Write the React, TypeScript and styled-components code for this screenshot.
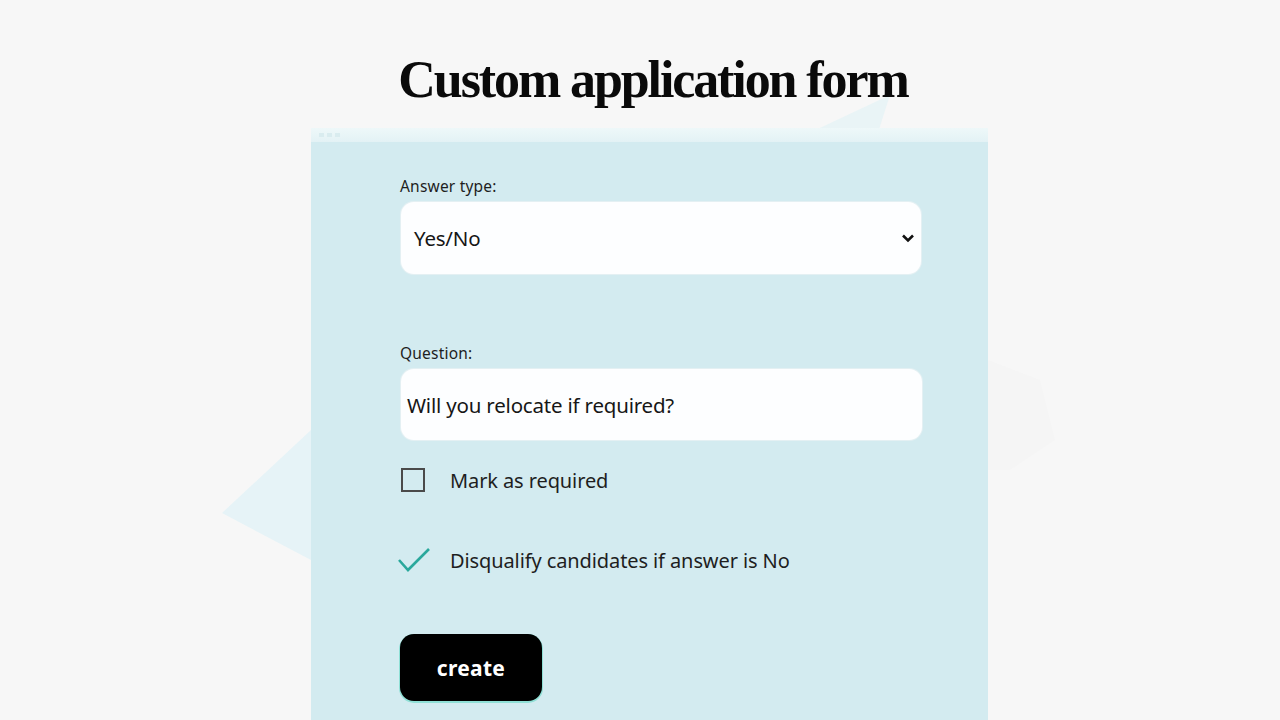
import React, { useState } from 'react';
import styled, { createGlobalStyle } from 'styled-components';

const GlobalStyle = createGlobalStyle`
  html, body {
    margin: 0;
    padding: 0;
    background: #f7f7f7;
  }
`

const Page = styled.div`
  position: relative;
  width: 1280px;
  height: 720px;
  overflow: hidden;
  background: #f7f7f7;
  font-family: "Noto Sans", "Open Sans", sans-serif;
`

const Decor = styled.svg`
  position: absolute;
  left: 0;
  top: 0;
  pointer-events: none;
`

const Header = styled.div`
  position: relative;
  height: 128px;
  padding-top: 50px;
  box-sizing: border-box;
  display: flex;
  justify-content: center;
`

const Title = styled.h1`
  margin: 0 0 0 26px;
  font-family: "Liberation Serif", "DejaVu Serif", serif;
  font-weight: 700;
  font-size: 52px;
  line-height: 60px;
  letter-spacing: -2.1px;
  color: #0a0a0a;
`

const Panel = styled.div`
  position: relative;
  width: 677px;
  margin-left: 311px;
  height: 592px;
  background: #d3ebf0;
`

const TopBar = styled.div`
  height: 14px;
  background: linear-gradient(to bottom, #eef8f9, #e3f2f5);
  display: flex;
  align-items: center;
  gap: 3px;
  padding-left: 8px;
`

const Dot = styled.span`
  width: 5px;
  height: 4px;
  background: #d9ecef;
`

const Form = styled.div`
  padding: 34px 0 0 89px;
  display: flex;
  flex-direction: column;
  align-items: flex-start;
`

const Label = styled.div`
  font-size: 15.5px;
  line-height: 20px;
  color: #1e1e1e;
  margin-bottom: 6px;
  letter-spacing: 0.2px;
`

const Field = styled.div<{ $width: number; $height: number; $pad: number }>`
  box-sizing: border-box;
  width: ${({ $width }) => $width}px;
  height: ${({ $height }) => $height}px;
  padding: 0 6px 0 ${({ $pad }) => $pad}px;
  margin-left: 1px;
  background: #fdfeff;
  border-radius: 13px;
  box-shadow: 0 0 0 1px #e4f0f3;
  display: flex;
  align-items: center;
  justify-content: space-between;
  font-size: 20.5px;
  color: #161616;
  letter-spacing: -0.2px;
`

const Spacer = styled.div<{ $h: number }>`
  height: ${({ $h }) => $h}px;
`

const OptionRow = styled.label`
  display: flex;
  align-items: center;
  height: 30px;
  cursor: pointer;
  font-size: 20px;
  color: #1e1e1e;
  letter-spacing: -0.1px;
`

const Box = styled.span`
  box-sizing: border-box;
  width: 24px;
  height: 24px;
  margin-left: 1px;
  border: 2.5px solid #4a4a4a;
  margin-right: 25px;
`

const Tick = styled.svg`
  margin-left: -3px;
  margin-right: 19px;
`

const CreateButton = styled.button`
  width: 142px;
  height: 67px;
  border: none;
  border-radius: 14px;
  background: #000;
  box-shadow: 0 1px 0 1px #8fe0d6;
  color: #fff;
  font-family: "Noto Sans", "Open Sans", sans-serif;
  font-weight: 700;
  font-size: 21px;
  letter-spacing: 0.3px;
  cursor: pointer;
`

const App = () => {
  const [required, setRequired] = useState(false);

  return (
    <Page>
      <GlobalStyle />
      <Decor width="1280" height="720">
        <polygon points="222,513 311,430 311,560" fill="#e6f3f7" />
        <polygon points="790,142 890,95 875,142" fill="#e9f4f6" />
        <polygon points="988,360 1040,380 1055,440 1010,470 988,470" fill="#f5f5f5" />
      </Decor>
      <Header>
        <Title>Custom application form</Title>
      </Header>
      <Panel>
        <TopBar>
          <Dot />
          <Dot />
          <Dot />
        </TopBar>
        <Form>
          <Label>Answer type:</Label>
          <Field $width={520} $height={72} $pad={13}>
            <span>Yes/No</span>
            <svg width="14" height="10" viewBox="0 0 14 10">
              <path d="M2 2.5 L7 7.5 L12 2.5" fill="none" stroke="#111" strokeWidth="2.6" />
            </svg>
          </Field>
          <Spacer $h={69} />
          <Label>Question:</Label>
          <Field $width={521} $height={71} $pad={6}>
            <span>Will you relocate if required?</span>
          </Field>
          <Spacer $h={25} />
          <OptionRow onClick={() => setRequired(!required)}>
            <Box />
            Mark as required
          </OptionRow>
          <Spacer $h={50} />
          <OptionRow>
            <Tick width="34" height="26" viewBox="0 0 34 26">
              <path d="M2 13 L11 23 L32 2" fill="none" stroke="#2aa89c" strokeWidth="2.6" />
            </Tick>
            Disqualify candidates if answer is No
          </OptionRow>
          <Spacer $h={59} />
          <CreateButton>create</CreateButton>
        </Form>
      </Panel>
    </Page>
  );
};

export default App;
